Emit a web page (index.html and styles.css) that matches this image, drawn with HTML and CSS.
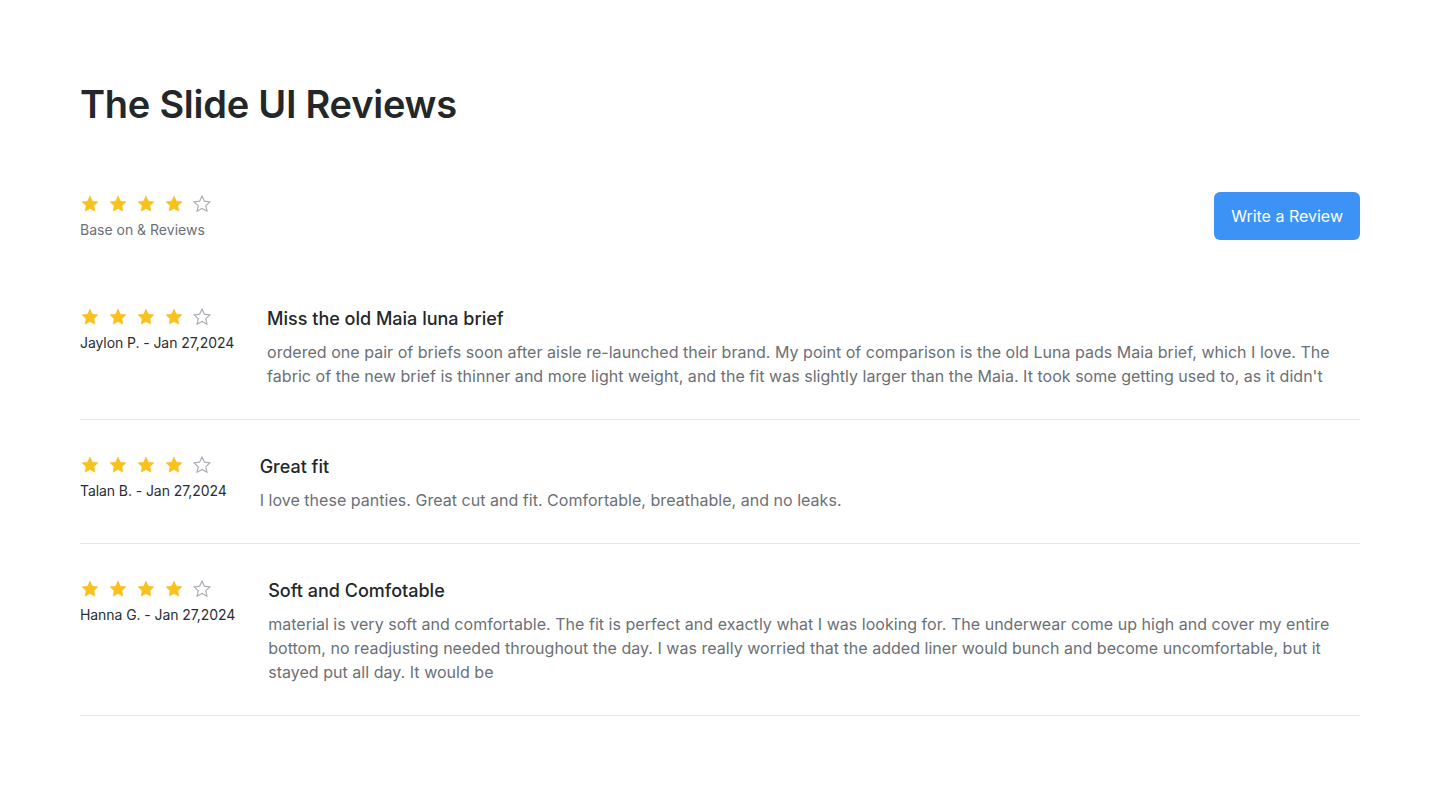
FILE: index.html
```html
<!DOCTYPE html>
<html lang="en">
<head>
<meta charset="utf-8">
<title>The Slide UI Reviews</title>
<link rel="stylesheet" href="styles.css">
</head>
<body>
<svg width="0" height="0" class="defs">
  <defs>
    <symbol id="star" viewBox="0 0 24 24"><path d="M12 2.5l2.9 6.1 6.6.8-4.9 4.6 1.3 6.6L12 17.3l-5.9 3.3 1.3-6.6-4.9-4.6 6.6-.8z"/></symbol>
  </defs>
</svg>
<main class="page">
  <h1 class="title">The Slide UI Reviews</h1>

  <section class="summary">
    <div class="summary-info">
      <div class="stars">
        <svg class="star full"><use href="#star"/></svg>
        <svg class="star full"><use href="#star"/></svg>
        <svg class="star full"><use href="#star"/></svg>
        <svg class="star full"><use href="#star"/></svg>
        <svg class="star empty"><use href="#star"/></svg>
      </div>
      <p class="summary-text">Base on &amp; Reviews</p>
    </div>
    <button class="btn">Write a Review</button>
  </section>

  <section class="reviews">
    <article class="review">
      <div class="meta">
        <div class="stars">
          <svg class="star full"><use href="#star"/></svg>
          <svg class="star full"><use href="#star"/></svg>
          <svg class="star full"><use href="#star"/></svg>
          <svg class="star full"><use href="#star"/></svg>
          <svg class="star empty"><use href="#star"/></svg>
        </div>
        <p class="author">Jaylon P. - Jan 27,2024</p>
      </div>
      <div class="body">
        <h2 class="review-title">Miss the old Maia luna brief</h2>
        <p class="review-text">ordered one pair of briefs soon after aisle re-launched their brand. My point of comparison is the old Luna pads Maia brief, which I love. The fabric of the new brief is thinner and more light weight, and the fit was slightly larger than the Maia. It took some getting used to, as it didn't</p>
      </div>
    </article>

    <article class="review">
      <div class="meta">
        <div class="stars">
          <svg class="star full"><use href="#star"/></svg>
          <svg class="star full"><use href="#star"/></svg>
          <svg class="star full"><use href="#star"/></svg>
          <svg class="star full"><use href="#star"/></svg>
          <svg class="star empty"><use href="#star"/></svg>
        </div>
        <p class="author">Talan B. - Jan 27,2024</p>
      </div>
      <div class="body">
        <h2 class="review-title">Great fit</h2>
        <p class="review-text">I love these panties. Great cut and fit. Comfortable, breathable, and no leaks.</p>
      </div>
    </article>

    <article class="review">
      <div class="meta">
        <div class="stars">
          <svg class="star full"><use href="#star"/></svg>
          <svg class="star full"><use href="#star"/></svg>
          <svg class="star full"><use href="#star"/></svg>
          <svg class="star full"><use href="#star"/></svg>
          <svg class="star empty"><use href="#star"/></svg>
        </div>
        <p class="author">Hanna G. - Jan 27,2024</p>
      </div>
      <div class="body">
        <h2 class="review-title">Soft and Comfotable</h2>
        <p class="review-text">material is very soft and comfortable. The fit is perfect and exactly what I was looking for. The underwear come up high and cover my entire bottom, no readjusting needed throughout the day. I was really worried that the added liner would bunch and become uncomfortable, but it stayed put all day. It would be</p>
      </div>
    </article>
  </section>
</main>
</body>
</html>
```

FILE: styles.css
```css
* { box-sizing: border-box; }

html, body {
  margin: 0;
  padding: 0;
  background: #ffffff;
}

body {
  font-family: Inter, "Noto Sans", sans-serif;
  color: #1f2328;
}

.defs {
  position: absolute;
  width: 0;
  height: 0;
  overflow: hidden;
}

.page {
  padding: 76px 80px 40px;
}

.title {
  margin: 0;
  font-size: 38px;
  line-height: 56px;
  font-weight: 600;
  letter-spacing: -0.25px;
  color: #23272a;
}

.summary {
  display: flex;
  justify-content: space-between;
  align-items: center;
  margin-top: 58px;
  padding-bottom: 57px;
}

.summary-info {
  padding-top: 4px;
}

.stars {
  display: flex;
  gap: 8px;
  height: 20px;
  align-items: center;
}

.star {
  width: 20px;
  height: 20px;
  display: block;
}

.star.full {
  fill: #f8c21a;
  stroke: #f3b815;
  stroke-width: 0.6;
}

.star.empty {
  fill: none;
  stroke: #a9adb3;
  stroke-width: 1.4;
}

.summary-text {
  margin: 5px 0 0;
  font-size: 14px;
  line-height: 22px;
  color: #6b7075;
}

.btn {
  font-family: inherit;
  font-size: 16px;
  color: #ffffff;
  background: #3d93f5;
  border: none;
  border-radius: 6px;
  height: 48px;
  padding: 0 17px;
  cursor: pointer;
}

.review {
  display: flex;
  gap: 33px;
  padding: 32px 0 31px;
  border-bottom: 1px solid #e6e8eb;
}

.review:first-child {
  padding-top: 6px;
}

.meta {
  flex: none;
  padding-top: 3px;
}

.author {
  margin: 5px 0 0;
  font-size: 14px;
  line-height: 22px;
  letter-spacing: -0.08px;
  color: #2a2e33;
}

.body {
  flex: 1;
  padding-top: 1px;
}

.review-title {
  margin: 0;
  font-size: 18px;
  line-height: 28px;
  font-weight: 500;
  color: #23272a;
}

.review-text {
  margin: 7px 0 0;
  font-size: 16px;
  line-height: 24px;
  letter-spacing: 0.03px;
  color: #6b7075;
}
```
